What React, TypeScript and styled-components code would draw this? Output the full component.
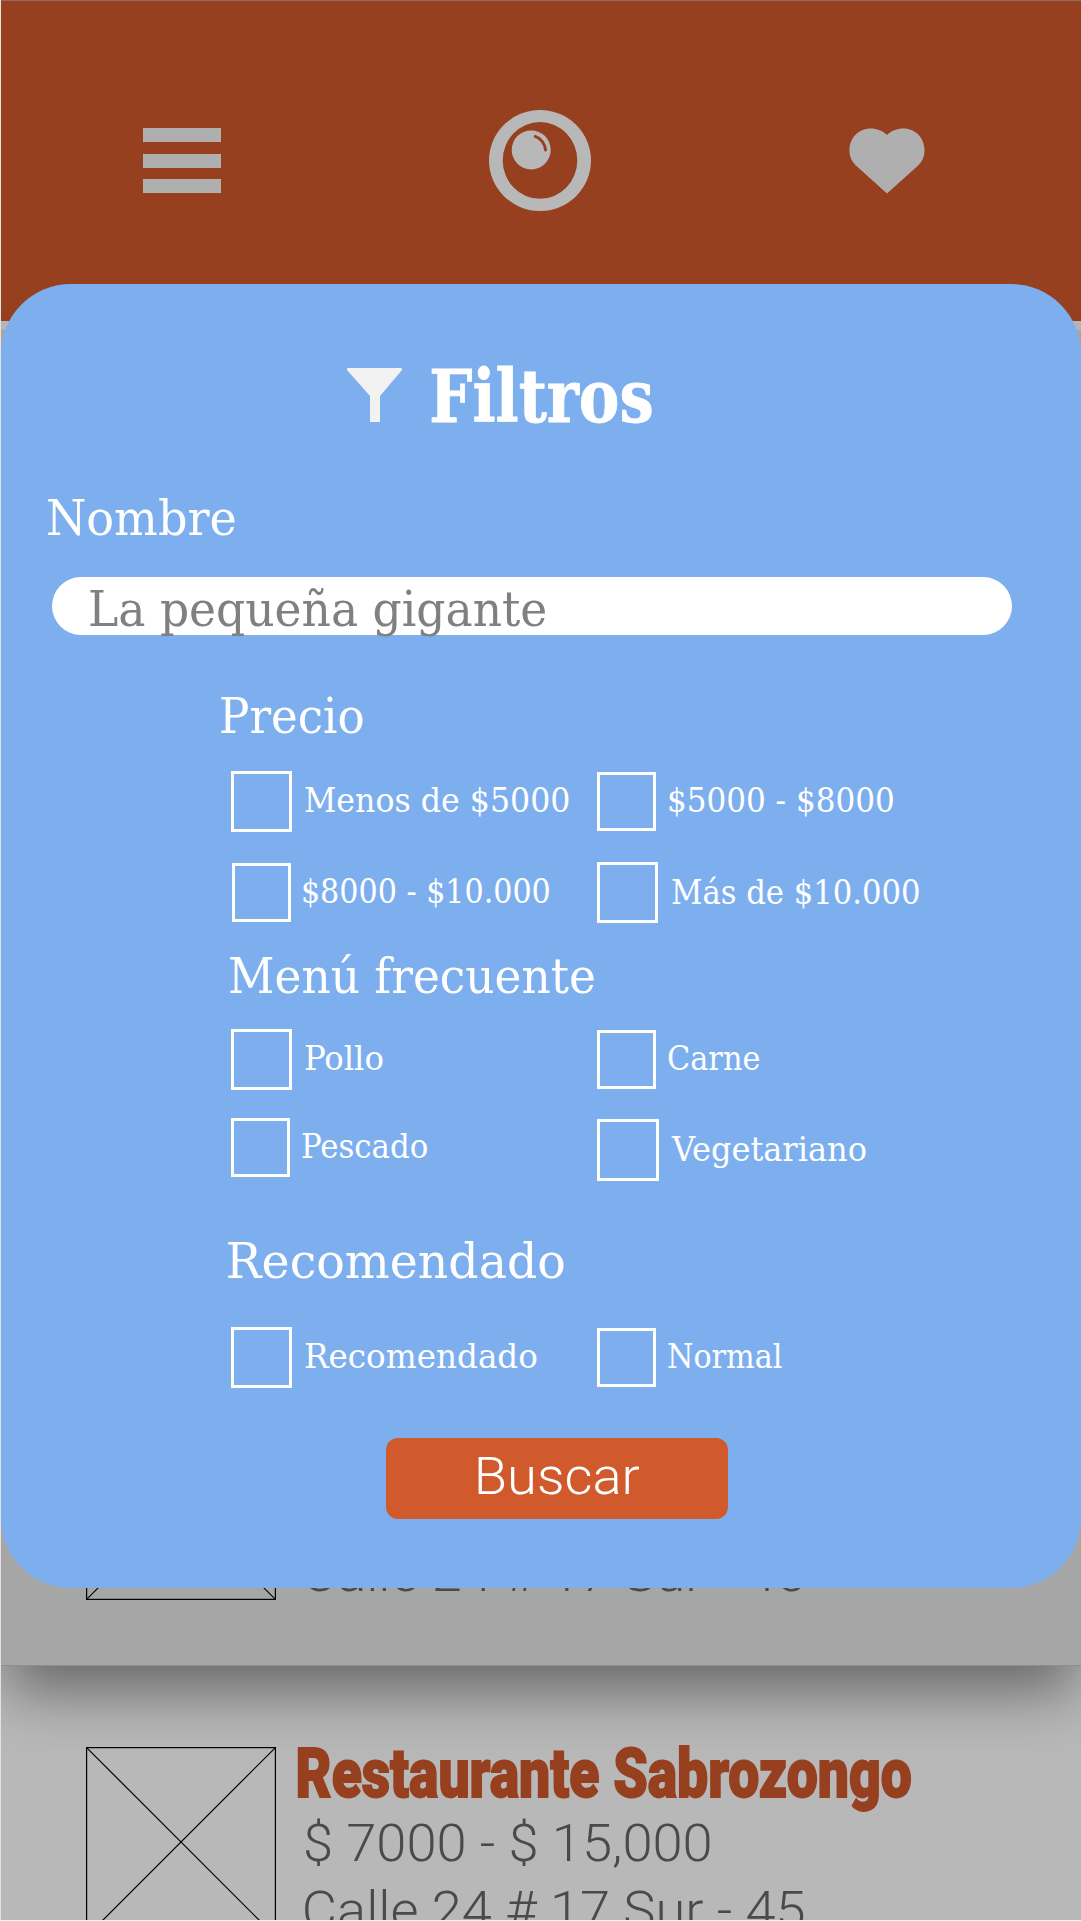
import React, { useLayoutEffect, useRef, useState } from "react";
import styled, { createGlobalStyle } from "styled-components";

const slab = `"DejaVu Serif Condensed", "DejaVu Serif", serif`;
const grotesk = `Roboto, "Liberation Sans", sans-serif`;

const Global = createGlobalStyle`
  *, *::before, *::after { box-sizing: border-box; }
  html, body { margin: 0; padding: 0; }
  body { width: 1081px; height: 1921px; overflow: hidden; background: #b8b8b8; }
`;

const FitBox = styled.span<{ $width: number }>`
  display: block;
  flex: none;
  width: ${(p) => p.$width}px;
  white-space: nowrap;
`;

const FitInk = styled.span`
  display: inline-block;
  vertical-align: top;
  transform-origin: 0 0;
`;

/* Stretches a line so that its ink spans exactly the given width. */
function Fit({ width, children }: { width: number; children: string }) {
  const ref = useRef<HTMLSpanElement>(null);
  const [transform, setTransform] = useState("none");
  useLayoutEffect(() => {
    const el = ref.current;
    const ctx = document.createElement("canvas").getContext("2d");
    if (!el || !ctx) return;
    const cs = getComputedStyle(el);
    ctx.font = `${cs.fontWeight} ${cs.fontSize} ${cs.fontFamily}`;
    const m = ctx.measureText(children);
    const ratio = width / (m.actualBoundingBoxLeft + m.actualBoundingBoxRight);
    setTransform(`translateX(${m.actualBoundingBoxLeft * ratio}px) scaleX(${ratio})`);
  }, [width, children]);
  return (
    <FitBox $width={width}>
      <FitInk ref={ref} style={{ transform }}>{children}</FitInk>
    </FitBox>
  );
}

const Screen = styled.div`
  position: relative;
  display: flex;
  flex-direction: column;
  width: 1081px;
  height: 1921px;
  overflow: hidden;
  background: #b8b8b8;
  border-left: 1px solid #e2e2e2;
  border-bottom: 1px solid #f4f4f4;
`;

const Header = styled.header`
  flex: none;
  display: flex;
  align-items: flex-start;
  height: 321px;
  margin-left: -1px;
  padding: 110px 156px 0 142.7px;
  justify-content: space-between;
  background: #964020;
  border-top: 1px solid #8f6d60;
  border-left: 1px solid #c95529;
`;

const MenuIcon = styled.div`
  display: flex;
  flex-direction: column;
  gap: 11.7px;
  width: 78px;
  margin: 17.3px 0 0 -1px;
`;

const MenuBar = styled.span`
  height: 13.9px;
  background: #afafaf;
`;

const Logo = styled.svg`
  width: 102px;
  height: 101px;
  margin: -1px 0 0 10.8px;
`;

const Heart = styled.svg`
  width: 76px;
  height: 66px;
  margin-top: 17px;
`;

const Highlighted = styled.section`
  flex: none;
  display: flex;
  flex-direction: column;
  justify-content: flex-end;
  height: 1336px;
  margin-top: 9px;
  padding: 0 0 66px 85px;
  background: #a6a6a6;
  border-bottom: 1px solid #8e8e8e;
  box-shadow: 0 32px 54px -7px rgba(0, 0, 0, 0.43);
`;

const Listing = styled.section`
  padding: 81px 0 0 85px;
`;

const Restaurant = styled.article`
  display: flex;
  gap: 21px;
  height: 189px;
`;

const Placeholder = styled.svg`
  flex: none;
  width: 190px;
  height: 190px;
`;

const Info = styled.div`
  display: flex;
  flex-direction: column;
  font-family: ${grotesk};
`;

const Name = styled.h2`
  flex: none;
  margin: 0 0 0 1px;
  height: 74px;
  font-size: 69px;
  font-weight: 900;
  line-height: 54px;
  color: #964020;
  -webkit-text-stroke: 1.8px #964020;
`;

const Detail = styled.p`
  flex: none;
  margin: 0 0 0 7.5px;
  height: 67px;
  font-size: 51.5px;
  font-weight: 300;
  line-height: 45px;
  color: #4a4a4a;
`;

const Dialog = styled.main`
  position: absolute;
  top: 284px;
  left: 0;
  width: 1080px;
  height: 1304px;
  padding-top: 72px;
  background: #7dafef;
  border-radius: 70px;
  color: #fff;
  font-family: ${slab};
`;

const TitleRow = styled.div`
  display: flex;
  align-items: flex-start;
  padding-left: 346px;
  gap: 29.5px;
`;

const Funnel = styled.svg`
  width: 55px;
  height: 54px;
  margin-top: 12px;
`;

const Title = styled.h1`
  margin: 0;
  font-size: 73.7px;
  font-weight: 700;
  line-height: 80px;
  -webkit-text-stroke: 0.8px #fff;
`;

const Heading = styled.h2<{ $top: number; $left: number }>`
  margin: ${(p) => p.$top}px 0 0 ${(p) => p.$left - 0.4}px;
  font-size: 49.4px;
  font-weight: 400;
  line-height: 60px;
`;

const Field = styled.div`
  display: flex;
  width: 960px;
  height: 58px;
  margin: 29.3px 0 0 51px;
  padding: 2.7px 0 0 38.2px;
  border-radius: 29px;
  background: #fff;
  color: #808080;
  font-size: 49.4px;
  line-height: 58px;
`;

const Options = styled.div<{ $top: number; $gap?: number }>`
  display: grid;
  grid-template-columns: 366px 1fr;
  grid-auto-rows: 62px;
  row-gap: ${(p) => p.$gap ?? 0}px;
  margin: ${(p) => p.$top}px 0 0 229.8px;
`;

const Option = styled.label<{ $shift: number; $drop: number; $gap: number }>`
  display: flex;
  align-items: center;
  gap: ${(p) => p.$gap}px;
  margin: ${(p) => p.$drop}px 0 ${(p) => -p.$drop}px ${(p) => p.$shift}px;
`;

const Check = styled.input<{ $size: number }>`
  flex: none;
  appearance: none;
  width: ${(p) => p.$size}px;
  height: ${(p) => p.$size}px;
  margin: 0;
  border: 3px solid #fff;
  border-radius: 0;
  &:checked { background: #fff; }
`;

const OptionText = styled.span<{ $size: number }>`
  font-size: ${(p) => p.$size}px;
  line-height: 40px;
  padding-bottom: 1px;
`;

const Search = styled.button`
  display: flex;
  justify-content: center;
  width: 342.5px;
  height: 81px;
  margin: 50px 0 0 384.6px;
  padding: 0;
  border: 0;
  border-radius: 12px;
  background: #d15a2c;
  color: #fff;
  font-family: ${grotesk};
  font-size: 51.5px;
  font-weight: 300;
  line-height: 78px;
`;

type Opt = { text: string; width: number; box: number; font: number; gap: number; shift?: number; drop?: number };

const prices: Opt[] = [
  { text: "Menos de $5000", width: 264, box: 61, font: 33.8, gap: 12.8 },
  { text: "$5000 - $8000", width: 224, box: 59, font: 32.7, gap: 13 },
  { text: "$8000 - $10.000", width: 246, box: 59, font: 32.7, gap: 12.4, shift: 1.2 },
  { text: "Más de $10.000", width: 247, box: 61.5, font: 34, gap: 14.2, drop: -0.5 },
];

const menus: Opt[] = [
  { text: "Pollo", width: 77.5, box: 61, font: 33.8, gap: 12.5, shift: 0.6 },
  { text: "Carne", width: 91, box: 59, font: 32.7, gap: 12 },
  { text: "Pescado", width: 125.5, box: 59, font: 32.7, gap: 12, shift: 0.6, drop: -1.5 },
  { text: "Vegetariano", width: 194.5, box: 62, font: 34, gap: 12, drop: 1 },
];

const recommended: Opt[] = [
  { text: "Recomendado", width: 231.5, box: 61, font: 33.8, gap: 12.8 },
  { text: "Normal", width: 114, box: 59, font: 32.7, gap: 12.4 },
];

function OptionGrid({ items, top, gap }: { items: Opt[]; top: number; gap?: number }) {
  return (
    <Options $top={top} $gap={gap}>
      {items.map((o) => (
        <Option key={o.text} $shift={o.shift ?? 0} $drop={o.drop ?? 0} $gap={o.gap}>
          <Check type="checkbox" $size={o.box} />
          <OptionText $size={o.font}><Fit width={o.width}>{o.text}</Fit></OptionText>
        </Option>
      ))}
    </Options>
  );
}

/* Only the address line of a covered item peeks out from below the dialog. */
function RestaurantItem({ covered = false }: { covered?: boolean }) {
  return (
    <Restaurant>
      <Placeholder viewBox="0 0 190 190" fill="none" stroke="#000" strokeWidth="1.2">
        <rect x="0.6" y="0.6" width="188.8" height="188.8" />
        <path d="M0.6 0.6L189.4 189.4M189.4 0.6L0.6 189.4" />
      </Placeholder>
      <Info>
        <Name>{!covered && <Fit width={612.5}>Restaurante Sabrozongo</Fit>}</Name>
        <Detail>{!covered && <Fit width={405}>$ 7000 - $ 15,000</Fit>}</Detail>
        <Detail><Fit width={499}>Calle 24 # 17 Sur - 45</Fit></Detail>
      </Info>
    </Restaurant>
  );
}

export default function App() {
  return (
    <>
      <Global />
      <Screen>
        <Header>
          <MenuIcon><MenuBar /><MenuBar /><MenuBar /></MenuIcon>
          <Logo viewBox="0 0 102 101">
            <path
              fill="#b8b8b8"
              fillRule="evenodd"
              d="M51 0A51 50.5 0 1 1 51 101A51 50.5 0 1 1 51 0ZM51 12A37.3 38.4 0 1 0 51 88.8A37.3 38.4 0 1 0 51 12Z"
            />
            <circle cx="42.2" cy="39.9" r="19.5" fill="#b8b8b8" />
            <path d="M46.2 26.4C51.5 28 56 33.5 56.6 40" fill="none" stroke="#964020" strokeWidth="2.9" strokeLinecap="round" />
          </Logo>
          <Heart viewBox="0 0 76 66" fill="#afafaf">
            <path d="M38 65.5L6.6 37.2C2.5 33.4.4 28.2.4 22.3C.4 9.8 9.6.4 21.6.4C28 .4 33.8 2.6 38 6.9C42.2 2.6 48 .4 54.4 .4C66.4 .4 75.6 9.8 75.6 22.3C75.6 28.2 73.5 33.4 69.4 37.2Z" />
          </Heart>
        </Header>
        <Highlighted><RestaurantItem covered /></Highlighted>
        <Listing><RestaurantItem /></Listing>

        <Dialog>
          <TitleRow>
            <Funnel viewBox="0 0 55 54" fill="#f2f2f2">
              <path d="M1 0H54Q55 0 55 1V2L33 28V54H23V28L0 2V1Q0 0 1 0Z" />
            </Funnel>
            <Title><Fit width={219.5}>Filtros</Fit></Title>
          </TitleRow>

          <Heading $top={51.7} $left={47}><Fit width={187.5}>Nombre</Fit></Heading>
          <Field><Fit width={456}>La pequeña gigante</Fit></Field>

          <Heading $top={50.9} $left={220.6}><Fit width={142}>Precio</Fit></Heading>
          <OptionGrid items={prices} top={24.8} gap={29.2} />

          <Heading $top={21.9} $left={229}><Fit width={364.5}>Menú frecuente</Fit></Heading>
          <OptionGrid items={menus} top={22.4} gap={27.7} />

          <Heading $top={50.7} $left={227}><Fit width={336}>Recomendado</Fit></Heading>
          <OptionGrid items={recommended} top={35.7} />

          <Search type="button"><Fit width={161.5}>Buscar</Fit></Search>
        </Dialog>
      </Screen>
    </>
  );
}
